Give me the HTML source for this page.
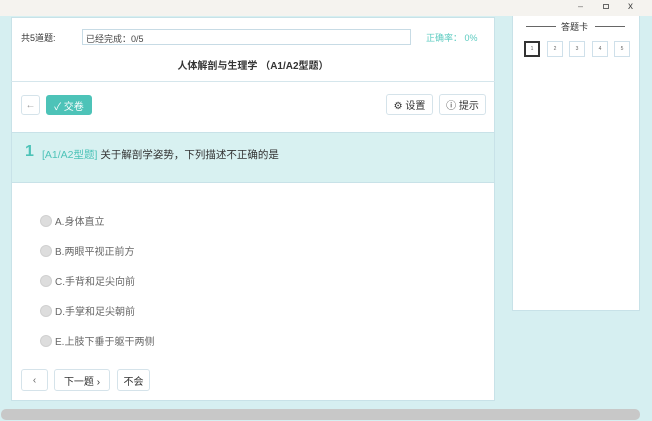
<!DOCTYPE html><html><head><meta charset="utf-8"><style>
*{margin:0;padding:0;box-sizing:border-box}
body{width:652px;height:421px;overflow:hidden;background:#d6eff1;font-family:"Liberation Sans","Noto Sans CJK SC",sans-serif;font-size:10px;color:#333;position:relative}
.a{position:absolute}
.btn{position:absolute;border:1px solid #d5e3ea;border-radius:3px;background:#fff;font-size:10px;display:flex;align-items:center;justify-content:center;color:#333}
.opt{position:absolute;left:40px;font-size:10px;color:#666;display:flex;align-items:center}
.opt i{display:inline-block;width:12px;height:12px;border-radius:50%;background:#ddd;border:1px solid #d0d0d0;margin-right:3px}
.n{position:absolute;top:41px;width:16px;height:16px;border:1px solid #cfe0ea;font-size:5px;color:#666;display:flex;align-items:center;justify-content:center}
</style></head><body>
<div class="a" style="left:0;top:0;width:652px;height:16px;background:#f5f3ef"></div>
<div class="a" style="left:578px;top:1px;font-size:9px;color:#666">–</div>
<div class="a" style="left:603px;top:4px;width:6px;height:5px;border:1px solid #666"></div>
<div class="a" style="left:628px;top:1px;font-size:10px;color:#444">x</div>
<div class="a" style="left:11px;top:17px;width:484px;height:384px;background:#fff;border:1px solid #c8e2e8"></div>
<div class="a" style="left:21px;top:31px;font-size:9px">共5道题:</div>
<div class="a" style="left:82px;top:29px;width:329px;height:16px;border:1px solid #c7dbe5;font-size:9px;padding:2px 3px;color:#444">已经完成：0/5</div>
<div class="a" style="left:426px;top:31px;font-size:9px;color:#5ccbc0">正确率： 0%</div>
<div class="a" style="left:0;top:57px;width:506px;text-align:center;font-size:10px;font-weight:bold">人体解剖与生理学 （A1/A2型题）</div>
<div class="a" style="left:11px;top:81px;width:484px;height:1px;background:#d5e6ec"></div>
<div class="btn" style="left:21px;top:95px;width:19px;height:20px;color:#999">←</div>
<div class="btn" style="left:46px;top:95px;width:46px;height:20px;background:#4dc3b8;border-color:#4dc3b8;color:#fff">✓ 交卷</div>
<div class="btn" style="left:386px;top:94px;width:47px;height:21px">⚙ 设置</div>
<div class="btn" style="left:439px;top:94px;width:47px;height:21px">ⓘ 提示</div>
<div class="a" style="left:12px;top:132px;width:482px;height:51px;background:#d8f1f1;border-top:1px solid #c8e2e8;border-bottom:1px solid #c8e2e8"></div>
<div class="a" style="left:25px;top:143px;font-size:16px;font-weight:bold;color:#4dc3b8">1</div>
<div class="a" style="left:42px;top:147px;font-size:10.5px;color:#4dc3b8">[A1/A2型题] <span style="color:#333">关于解剖学姿势，下列描述不正确的是</span></div>
<div class="opt" style="top:213px"><i></i>A.身体直立</div>
<div class="opt" style="top:243px"><i></i>B.两眼平视正前方</div>
<div class="opt" style="top:273px"><i></i>C.手背和足尖向前</div>
<div class="opt" style="top:303px"><i></i>D.手掌和足尖朝前</div>
<div class="opt" style="top:333px"><i></i>E.上肢下垂于躯干两侧</div>
<div class="btn" style="left:21px;top:369px;width:27px;height:22px;color:#666">‹</div>
<div class="btn" style="left:54px;top:369px;width:56px;height:22px">下一题 ›</div>
<div class="btn" style="left:117px;top:369px;width:33px;height:22px">不会</div>
<div class="a" style="left:512px;top:16px;width:128px;height:295px;background:#fff;border:1px solid #c8e2e8;border-top:none"></div>
<div class="a" style="left:526px;top:26px;width:30px;height:1px;background:#666"></div>
<div class="a" style="left:561px;top:20px;font-size:9px;color:#333">答题卡</div>
<div class="a" style="left:595px;top:26px;width:30px;height:1px;background:#666"></div>
<div class="n" style="left:524px;border:2px solid #333">1</div>
<div class="n" style="left:547px">2</div>
<div class="n" style="left:569px">3</div>
<div class="n" style="left:592px">4</div>
<div class="n" style="left:614px">5</div>
<div class="a" style="left:1px;top:409px;width:639px;height:11px;background:#c8c8c8;border-radius:5px"></div>
</body></html>
